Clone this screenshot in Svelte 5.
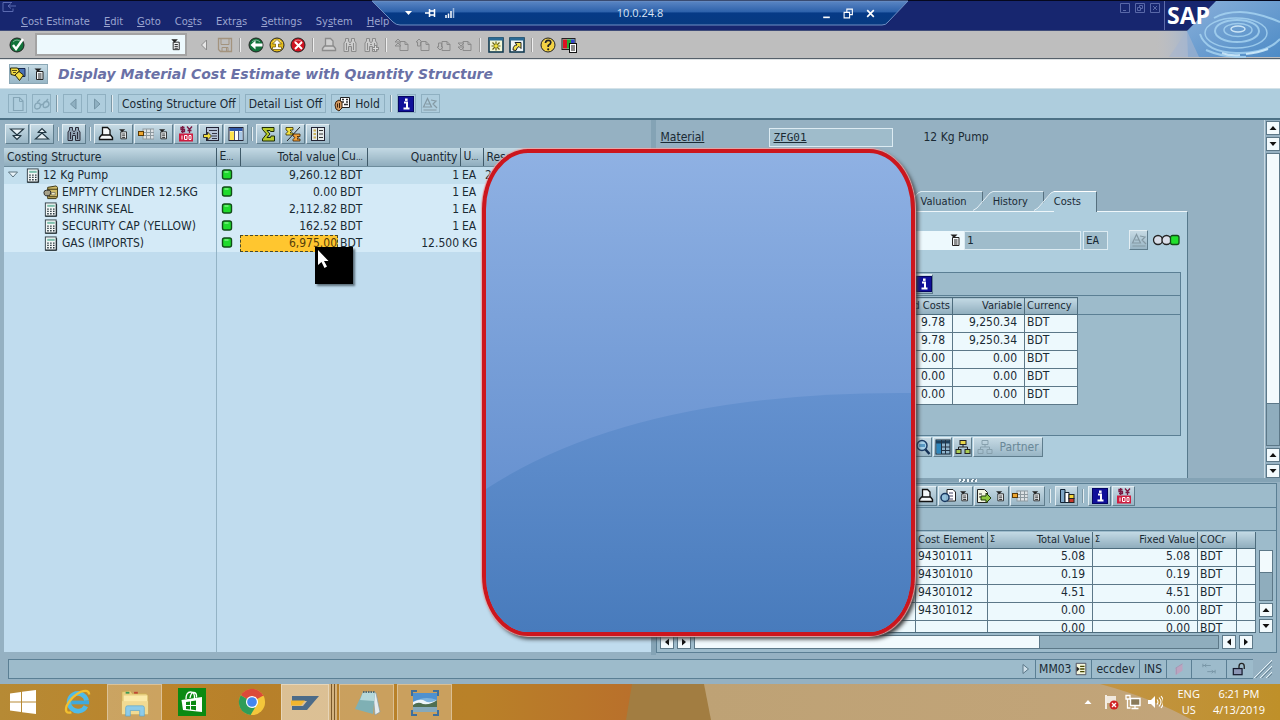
<script>
  const menu = [['C', 'ost Estimate'], ['E', 'dit'], ['G', 'oto'], ['Co', 'sts', 1], ['Extr', 'as', 1], ['S', 'ettings'], ['Sy', 'stem', 1], ['H', 'elp']];

  const tree = [
    { level: 0, icon: 'calc', name: '12 Kg Pump', value: '9,260.12', cur: 'BDT', qty: '1', unit: 'EA', res: '2' },
    { level: 1, icon: 'material', name: 'EMPTY CYLINDER 12.5KG', value: '0.00', cur: 'BDT', qty: '1', unit: 'EA', res: '' },
    { level: 1, icon: 'calc', name: 'SHRINK SEAL', value: '2,112.82', cur: 'BDT', qty: '1', unit: 'EA', res: '' },
    { level: 1, icon: 'calc', name: 'SECURITY CAP (YELLOW)', value: '162.52', cur: 'BDT', qty: '1', unit: 'EA', res: '' },
    { level: 1, icon: 'calc', name: 'GAS (IMPORTS)', value: '6,975.00', cur: 'BDT', qty: '12.500', unit: 'KG', res: '', selected: true }
  ];

  const costs = [
    ['9.78', '9,250.34', 'BDT'],
    ['9.78', '9,250.34', 'BDT'],
    ['0.00', '0.00', 'BDT'],
    ['0.00', '0.00', 'BDT'],
    ['0.00', '0.00', 'BDT']
  ];

  const items = [
    ['94301011', '5.08', '5.08', 'BDT'],
    ['94301010', '0.19', '0.19', 'BDT'],
    ['94301012', '4.51', '4.51', 'BDT'],
    ['94301012', '0.00', '0.00', 'BDT'],
    ['', '0.00', '0.00', 'BDT']
  ];

  const page = (c) => `<path d="M6 4.500h5l3 3v6h-8z" fill="none" stroke="${c}"/><path d="M11 4.500v3h3" fill="none" stroke="${c}"/>`;
  const binoculars = (s, f) => `<path d="M2 14.500v-8.500l1.500-2v-2.500h3v2.500l1 1.500h1l1-1.500v-2.500h3v2.500l1.500 2v8.500h-4.500v-5h-3v5z" fill="${f}" stroke="${s}"/><path d="M4.500 6v7M11.500 6v7M7 7.500h2" stroke="${s}" fill="none"/>`;
  const printer = (s, f) => `<path d="M4.500 9v-7.500h5l2.500 2.500v5" fill="${f}" stroke="${s}" stroke-width="1.300"/><path d="M1.500 13.500v-2l2-2.500h9l2 2.500v2z" fill="${f}" stroke="${s}" stroke-width="1.400"/>`;
  const currency = `<path d="M6.500 1.500h-3.500v2h3.500v2h-3.500M4.700 0v7M9 0.500l2.500 3 2.500-3M11.500 3v4M9.500 4.500h4" fill="none" stroke="#7a1740" stroke-width="1.300"/><rect x="1" y="7.500" width="14" height="8" fill="#cf1c3f"/><path d="M4 9.500v4M6.500 9.500h2.500v4h-2.500zM11 9.500h2v4h-2z" fill="none" stroke="#fff"/>`;
  const ball = (fill, mark) => `<circle cx="8" cy="8" r="7" fill="${fill}" stroke="#222"/><path d="M4 5q4-4 8 0" fill="none" stroke="#fff" stroke-opacity=".45"/>${mark}`;
  const grid = `<rect x="5" y="3" width="11" height="10" fill="#dde2e5" stroke="#8d999f"/><path d="M5 6.500h11M5 9.500h11M8.500 3v10M12.500 3v10" stroke="#8d999f"/><rect x="0.500" y="5.500" width="5" height="4" fill="#eda52f" stroke="#5c3a05"/>`;

  const icons = {
    ok: ball('#12733a', '<path d="M4 8l3 4 7-10" fill="none" stroke="#fff" stroke-width="2.400"/>'),
    back: ball('#12733a', '<path d="M2.500 8l5-4.500v3h7v3h-7v3z" fill="#fff"/>'),
    up: ball('#e5bd1d', '<path d="M8 2.500l4.500 4.500h-3v3h3v2.500h-9v-2.500h3v-3h-3z" fill="#fff" stroke="#6a5100" stroke-width=".7"/>'),
    cancel: ball('#cf1321', '<path d="M5 5l7 7M12 5l-7 7" stroke="#fff" stroke-width="2"/>'),
    help: ball('#f3d244', '<path d="M5.500 6q0-2.700 2.700-2.700t2.600 2.300q0 1.500-2.600 2.900v1.500" fill="none" stroke="#222" stroke-width="1.700"/><circle cx="8.200" cy="12.300" r="1.100" fill="#222"/>'),
    list: '<path d="M5.500 5.500h6.500v8h-6.500z" fill="#f4f8fa" stroke="#222"/><path d="M7 8h3.500M7 10h3.500M7 12h3.500" stroke="#222"/><path d="M3.500 2.500h7l-3.500 3.500z" fill="#222"/>',
    save: '<path d="M1.500 1.500h13v13h-11l-2-2z" fill="none" stroke="#a3937e" stroke-width="1.300"/><path d="M4 1.500v6h8v-6M5 14.500v-4h6v4M9.500 11v3" fill="none" stroke="#a3937e"/>',
    print: printer('#111', '#f6f9fa'),
    printOff: printer('#8b8b8b', '#cfcfcf'),
    find: binoculars('#2c2c3a', '#8fa0b0'),
    findOff: binoculars('#8b8b8b', '#cccccc'),
    findNextOff: binoculars('#8b8b8b', '#cccccc') + '<path d="M12.500 8v7M9 11.500h7" stroke="#8b8b8b" stroke-width="3"/><path d="M12.500 9v5M10 11.500h5" stroke="#ddd"/>',
    pageFirst: page('#8b8b8b') + '<path d="M1 5l3-3 3 3zM1 9l3-3 3 3z" fill="#bbb" stroke="#8b8b8b"/>',
    pagePrev: page('#8b8b8b') + '<path d="M1 5l3-3 3 3h-1.500v4h-3v-4z" fill="#bbb" stroke="#8b8b8b"/>',
    pageNext: page('#8b8b8b') + '<path d="M1 10l3 3 3-3h-1.500v-4h-3v4z" fill="#bbb" stroke="#8b8b8b"/>',
    pageLast: page('#8b8b8b') + '<path d="M1 6l3 3 3-3zM1 10l3 3 3-3z" fill="#bbb" stroke="#8b8b8b"/>',
    session: '<rect x="1" y="1" width="14" height="14" fill="#f4f7d8" stroke="#123b52" stroke-width="1.600"/><path d="M1 2h14" stroke="#2a6a95" stroke-width="3"/><path d="M8 4.500v9M3.500 9h9M4.500 5.500l7 7M11.500 5.500l-7 7" stroke="#65620c" stroke-width="1.200"/><circle cx="8" cy="9" r="1.800" fill="#f5e53b"/>',
    shortcut: '<rect x="1" y="1" width="14" height="14" fill="#eef5f7" stroke="#123b52" stroke-width="1.600"/><path d="M1 2h14" stroke="#2a6a95" stroke-width="3"/><path d="M4 13q0-5 4-5l-2-2.500h6v6l-2-2q-2 .5-3 4z" fill="#f3e04a" stroke="#222"/>',
    layout: '<rect x="1" y="1.500" width="13" height="11" fill="#9cb" stroke="#222"/><rect x="2" y="2.500" width="4" height="9" fill="#d12"/><rect x="6" y="2.500" width="4" height="9" fill="#2a3"/><rect x="10" y="2.500" width="3.500" height="5" fill="#34c"/><rect x="8.500" y="6.500" width="7" height="9" fill="#fff" stroke="#111"/><path d="M10 9h4M10 11h4M10 13h4" stroke="#111"/>',
    services: '<path d="M7 2.500h8v8h-5z" fill="#4b73b5" stroke="#16264d"/><path d="M0.500 2h7l2 3-3 2.500-1.500 2-4-1z" fill="#f2dd45" stroke="#2c2808"/><path d="M5 9l4-3.500 4.500 3.500-4 5.500z" fill="#f2dd45" stroke="#2c2808"/><path d="M2 4.500h5M3 6.500h3" stroke="#2c2808" stroke-width=".8"/>',
    newOff: '<path d="M3.500 1.500h6l3.500 3.500v9.500h-9.500z" fill="none" stroke="#85a6b7" stroke-width="1.200"/><path d="M9.500 1.500v4h3.500" fill="none" stroke="#85a6b7"/>',
    glassesOff: '<path d="M1 9q-1 4 2 4t3.500-3q0-3-2.500-3t-3 2M9.500 8q-1 4 2 3.500t3.500-3q0-3-2.500-3t-3 2.500M6.500 9.500q1.500-2 3-1M3 6.500l3-3M12 5.500l2-2.500" fill="none" stroke="#85a6b7" stroke-width="1.400"/>',
    leftOff: '<path d="M11 3v10l-5.500-5z" fill="#8fb0c1" stroke="#7595a6"/>',
    rightOff: '<path d="M5.500 3v10l5.500-5z" fill="#8fb0c1" stroke="#7595a6"/>',
    hold: '<path d="M6.500 1.500h9v10h-9z" fill="#fff" stroke="#222"/><path d="M8 3.500h2M12 3.500h2M8 6h2M12 6h2M10 8.500h4" stroke="#333" stroke-width="1.300"/><path d="M1 9q0-4 4-5l3 2v6l-3 3q-4-1-4-6z" fill="#d49a60" stroke="#3b220c"/><path d="M3.500 7.500v4M5.500 7v5" stroke="#3b220c"/>',
    info: '<rect x="0.500" y="0.500" width="15" height="15" fill="#10109a" stroke="#050562"/><path d="M6 6.500h3v5.500M5.500 12.500h6" stroke="#fff" stroke-width="2" fill="none"/><rect x="7" y="2.500" width="2.600" height="2.400" fill="#fff"/>',
    scaleOff: '<path d="M1.500 11l4-8.500 4 8.500zM1.500 14h13M9 4l5 1-3 3 4 4M4 8h4" fill="none" stroke="#8499a4" stroke-width="1.200"/>',
    expand: '<path d="M1.500 3h13l-6.500 6zM4 9.500l4 4 4-4" fill="#e6f0f5" stroke="#223642" stroke-width="1.200"/><path d="M3.500 9.500h9" stroke="#223642"/>',
    collapse: '<path d="M1.500 13h13l-6.500-6zM4 6.500l4-4 4 4" fill="#e6f0f5" stroke="#223642" stroke-width="1.200"/><path d="M3.500 6.500h9" stroke="#223642"/>',
    grid,
    currency,
    change: '<rect x="3.500" y="1.500" width="12" height="13" fill="#b7c3d6" stroke="#223"/><path d="M6 4.500h8M9 7.500h5M9 10h5M9 12.500h5" stroke="#334"/><path d="M0.500 8.500h4v-2.500l4 4-4 4v-2.500h-4z" fill="#f2df3b" stroke="#333"/>',
    columns: '<rect x="1" y="1.500" width="14" height="13" fill="#fff" stroke="#223"/><rect x="1.500" y="2" width="13" height="3" fill="#3057a8"/><rect x="2" y="5.500" width="4" height="8.500" fill="#ffe34e"/><path d="M6.500 5v9M10.500 5v9" stroke="#557"/><rect x="11" y="5.500" width="3.500" height="8.500" fill="#a9c8e6"/>',
    sum: '<path d="M2 1.500h12v4h-3.500l-.5-1h-3l3 3.500-3 3.500h3.500l.5-1.500h3.500v5h-12v-2l4-5-4-4.500z" fill="#b7c92b" stroke="#1c2a06"/>',
    subtotal: '<path d="M1 1.500h7v2.500h-3l1.500 1.500-1.500 1.500h3v2h-7v-1.500l2-2-2-1.500z" fill="#f3e140" stroke="#332b00" stroke-width=".8"/><path d="M8 8h7v2.500h-3l1.500 1.200-1.500 1.300h3v2h-7v-1.500l2-2-2-1.500z" fill="#f0a13c" stroke="#402100" stroke-width=".8"/><path d="M15 1l-13 14" stroke="#222"/>',
    legend: '<rect x="1.500" y="1.500" width="13" height="13" fill="#e4eaea" stroke="#223"/><path d="M3.500 4.500h2.500M3.500 8h2.500M3.500 11.500h2.500" stroke="#c9b15a" stroke-width="2"/><path d="M9 4.500h4M9 8h4M9 11.500h4M7.500 2v12" stroke="#333"/>',
    calc: '<rect x="2.500" y="1" width="11.500" height="14" fill="#f2f6f5" stroke="#33424a"/><path d="M2.500 15.200h12v-13" fill="none" stroke="#1b2428"/><rect x="4.500" y="3" width="8" height="2.200" fill="#7dc0ad"/><path d="M4.500 7.500h8M4.500 10h8M4.500 12.500h8" stroke="#26353d" stroke-width="1.400" stroke-dasharray="1.600 1.500"/>',
    material: '<path d="M5 2.500l9-1.500 1.500 1.500v10l-1.500 2h-9z" fill="#d1bd6a" stroke="#3a3210"/><path d="M5 4.500h10M6 12.500h9" stroke="#3a3210"/><path d="M1 8q0-2.500 3-2.500h3l1.500 2-1.500 4h-4q-2-.5-2-3.500z" fill="#a7a189" stroke="#222"/><path d="M9 8h4v2.500h-4z" fill="#f5efc5" stroke="#555" stroke-width=".6"/>',
    led: '<rect x="3.500" y="3" width="9" height="9" rx="2" fill="#1fdb2c" stroke="#114d18" stroke-width="1.400"/><path d="M5.500 5h4" stroke="#a8ffad"/>',
    detail: '<circle cx="7" cy="6.500" r="5" fill="#a8d2ea" stroke="#1c3d66" stroke-width="1.500"/><path d="M4 5h6v3h-6z" fill="#5b9cc7"/><path d="M10.500 10.500l4 4.500" stroke="#143157" stroke-width="2.500"/>',
    table: '<rect x="1" y="1" width="14" height="14" fill="#8fb4cc" stroke="#123"/><path d="M1.500 1.500h5v13h-5z" fill="#2e86bb"/><path d="M1 3h14" stroke="#1d405c" stroke-width="3"/><path d="M6.500 1v14M10.500 1v14M6 8h9M6 11.500h9" stroke="#234"/>',
    org: '<rect x="5" y="1.500" width="6" height="4" fill="#e8d54a" stroke="#222"/><rect x="1" y="10.500" width="5" height="4" fill="#a9cc52" stroke="#222"/><rect x="10" y="10.500" width="5" height="4" fill="#a9cc52" stroke="#222"/><path d="M8 5.500v2.500M3.500 10.500v-2.500h9v2.500" fill="none" stroke="#222"/>',
    orgOff: '<path d="M5 1.500h6v4h-6zM1 10.500h5v4h-5zM10 10.500h5v4h-5zM8 5.500v2.500M3.500 10.500v-2.500h9v2.500" fill="none" stroke="#87a0ad"/>',
    views: '<path d="M7 1.500h6l2.500 2.500v9h-8.500z" fill="#fff" stroke="#222"/><path d="M9 5h4M9 8h4M9 11h4" stroke="#446"/><circle cx="5" cy="9.500" r="4" fill="#8fc1de" fill-opacity=".8" stroke="#17365e" stroke-width="1.500"/>',
    export: '<path d="M1.500 1.500h7l3 3v10h-10z" fill="#f4f6e2" stroke="#222"/><path d="M3 6h3M3 9h3" stroke="#333"/><path d="M5 8h5v-3l5 5-5 5v-3h-5z" fill="#8cc63c" stroke="#1e3a08"/>',
    chart: '<path d="M1.500 1.500h4.500v13h-4.500z" fill="#7fa7c8" stroke="#123"/><path d="M6 4.500h4v10h-4z" fill="#fff" stroke="#123"/><rect x="10" y="6.500" width="5" height="4" fill="#f4d53a" stroke="#222"/><rect x="10" y="10.500" width="5" height="4" fill="#c8392c" stroke="#222"/>',
    flag: '<path d="M3 1v14" stroke="#fff" stroke-width="1.600"/><path d="M4 2h9v7h-9z" fill="#fff" fill-opacity=".75"/><circle cx="11" cy="11" r="4.500" fill="#d02323"/><path d="M9 9l4 4M13 9l-4 4" stroke="#fff" stroke-width="1.300"/>',
    network: '<path d="M5.500 4.500h9.500v7h-9.500z" fill="#8a7a5a" stroke="#fff" stroke-width="1.400"/><path d="M10 11.500v2.500M6.500 14.500h7M2.500 5v9h3M1 1.500h4v3.500h-4z" fill="none" stroke="#fff" stroke-width="1.300"/>',
    sound: '<path d="M1 6h3l4-4v12l-4-4h-3z" fill="#fff"/><path d="M10 5.500q2 2.500 0 5M12 3.500q4 4.500 0 9M14 2q5 6 0 12" fill="none" stroke="#fff" stroke-width="1.100"/>'
  };

  const standardBar = [
    ['back', 'Back'], ['up', 'Exit'], ['cancel', 'Cancel'], null,
    ['printOff', 'Print'], ['findOff', 'Find'], ['findNextOff', 'Find next'], null,
    ['pageFirst', 'First page'], ['pagePrev', 'Previous page'], ['pageNext', 'Next page'], ['pageLast', 'Last page'], null,
    ['session', 'New session'], ['shortcut', 'Create shortcut'], null,
    ['help', 'Help'], ['layout', 'Customize layout']
  ];

  const treeBar = [
    ['expand', 'Expand'], ['collapse', 'Collapse'], null, ['find', 'Find'], null,
    ['print', 'Print', 1], ['grid', 'Layout', 1], ['currency', 'Currency'], ['change', 'Change view'], ['columns', 'Columns'], null,
    ['sum', 'Total'], ['subtotal', 'Subtotal'], ['legend', 'Legend']
  ];

  const itemBar = [
    ['print', 'Print'], ['views', 'Views', 1], ['export', 'Export', 1], ['grid', 'Layout', 1], null,
    ['chart', 'Chart'], null, ['info', 'Information'], ['currency', 'Currency']
  ];
</script>

{#snippet icon(name)}
  <svg class="icon" viewBox="0 0 16 16" aria-hidden="true">{@html icons[name]}</svg>
{/snippet}

{#snippet tools(list)}
  {#each list as entry}
    {#if entry}
      <button class="tool" class:wide={entry[2]} aria-label={entry[1]}>
        {@render icon(entry[0])}
        {#if entry[2]}{@render icon('list')}{/if}
      </button>
    {:else}
      <span class="sep"></span>
    {/if}
  {/each}
{/snippet}

{#snippet arrow(dir)}
  <button class="arrow" aria-label="Scroll {dir}">
    <svg viewBox="0 0 12 12" aria-hidden="true">
      {#if dir === 'up'}<path d="M2.500 8h7l-3.500-4z" />
      {:else if dir === 'down'}<path d="M2.500 4h7l-3.500 4z" />
      {:else if dir === 'left'}<path d="M8 2.500v7l-4-3.500z" />
      {:else}<path d="M4 2.500v7l4-3.500z" />{/if}
    </svg>
  </button>
{/snippet}

{#snippet slant(active)}
  <svg class="slant" class:active viewBox="0 0 20 20" aria-hidden="true">
    <path class="fill" d="M0 20L4 18L18 1.500L20 0.500V20Z" />
    <path class="edge" d="M0 19.500L4 17L17 2L20 0.500" />
  </svg>
{/snippet}

<div class="screen">
  <header class="menubar">
    <nav>
      {#each menu as [a, b, tail]}
        <button class="menu-item">{#if tail}{a}<u>{b[0]}</u>{b.slice(1)}{:else}<u>{a}</u>{b}{/if}</button>
      {/each}
    </nav>
    <svg class="sys" viewBox="0 0 16 12" aria-hidden="true"><path d="M11 1.500h-9v9h10v-3M15 5h-8M10 2.500l-3 2.500 3 2.500" fill="none" stroke="#5b6ab0" /></svg>
    <div class="win-ctl">
      <button aria-label="Minimize"><svg viewBox="0 0 10 10"><path d="M.5.500h9v9h-9zM3 7.500h3" /></svg></button>
      <button aria-label="Restore"><svg viewBox="0 0 10 10"><path d="M.5.500h9v9h-9zM2.500 4.500h3v3h-3zM4.500 4v-1.500h3v3h-1.500" /></svg></button>
      <button aria-label="Close"><svg viewBox="0 0 10 10"><path d="M.5.500h9v9h-9zM3 3l4 4M7 3l-4 4" /></svg></button>
    </div>
  </header>

  <div class="remote">
    <svg class="remote-bg" viewBox="0 0 536 26" preserveAspectRatio="none" aria-hidden="true">
      <defs>
        <linearGradient id="rd" x1="0" y1="0" x2="0" y2="1">
          <stop offset="0" stop-color="#5b86c4" /><stop offset=".45" stop-color="#2e62ab" />
          <stop offset=".5" stop-color="#063a86" /><stop offset="1" stop-color="#073a80" />
        </linearGradient>
      </defs>
      <path d="M0 1h536l-20 21q-2 3-6 3h-482q-4 0-7-3z" fill="url(#rd)" stroke="#6f8fc4" />
    </svg>
    <div class="remote-left">
      <svg viewBox="0 0 50 12" aria-hidden="true">
        <path d="M1 4h7l-3.500 4z" fill="#fff" />
        <path d="M21 6h4M25.500 2v8M25.500 4h5M25.500 8h5M30.500 2v8" stroke="#fff" fill="none" stroke-width="1.500" />
        <path d="M42 11v-3M44.500 11v-4.500M47 11v-7" stroke="#fff" stroke-width="1.500" /><path d="M49.500 11v-10" stroke="#9db8dd" stroke-width="1.500" />
      </svg>
    </div>
    <span class="host">10.0.24.8</span>
    <div class="remote-right">
      <button aria-label="Minimize session"><svg viewBox="0 0 10 10"><path d="M2 8.500h6" stroke="#fff" stroke-width="1.500" /></svg></button>
      <button aria-label="Restore session"><svg viewBox="0 0 10 10"><path d="M1 4h5v5h-5zM3.500 4v-3h5v5h-2.500" stroke="#fff" stroke-width="1" fill="none" /></svg></button>
      <button aria-label="Close session"><svg viewBox="0 0 10 10"><path d="M2 2l6 6M8 2l-6 6" stroke="#fff" stroke-width="1.500" /></svg></button>
    </div>
  </div>

  <div class="brand">
    <svg viewBox="0 0 124 58" aria-hidden="true">
      <defs>
        <linearGradient id="sky" x1="0" y1="0" x2="1" y2="0">
          <stop offset="0" stop-color="#b9bccb" stop-opacity="0" /><stop offset=".35" stop-color="#8fb0d4" /><stop offset="1" stop-color="#5d93c9" />
        </linearGradient>
        <linearGradient id="sky2" x1="0" y1="0" x2="1" y2="1">
          <stop offset="0" stop-color="#8ab0da" /><stop offset="1" stop-color="#4d8bc6" />
        </linearGradient>
      </defs>
      <path d="M0 31h124v26h-124z" fill="url(#sky)" />
      <path d="M60 1h64v56h-92l-1-26z" fill="url(#sky2)" />
      <path d="M31 31l-18 26h30z" fill="#a7b6cf" opacity=".6" />
      <path d="M8.500 1v29" stroke="#5d6cab" />
      <g fill="none" stroke="#a9d6f2" stroke-opacity=".8">
        <ellipse cx="82" cy="29" rx="7" ry="3" stroke="#e3f6ff" stroke-width="1.500" />
        <ellipse cx="82" cy="30" rx="14" ry="6.500" stroke-width="1.500" />
        <ellipse cx="81" cy="31" rx="22" ry="11" stroke-width="2" />
        <ellipse cx="80" cy="33" rx="31" ry="15" stroke-width="1.500" />
        <path d="M44 34q6 18 36 19t44-14M58 18q10-6 26-6t40 10M50 50q18 8 40 7" stroke-width="2" />
        <path d="M66 53q8 3 18 2M90 54q12-1 22-5" stroke="#d8f3ff" stroke-width="2" />
      </g>
    </svg>
    <span>SAP</span>
  </div>

  <div class="stdbar">
    <button class="ok" aria-label="Enter">{@render icon('ok')}</button>
    <div class="command">
      <input type="text" aria-label="Command" />
      <button aria-label="Command history">{@render icon('list')}</button>
    </div>
    <button class="std" aria-label="Hide command field"><svg class="icon" viewBox="0 0 16 16"><path d="M10.500 3v10l-5-5z" fill="#e6e6e6" stroke="#8b8b8b" /></svg></button>
    <button class="std" aria-label="Save">{@render icon('save')}</button>
    <span class="sep"></span>
    {#each standardBar as entry}
      {#if entry}<button class="std" aria-label={entry[1]}>{@render icon(entry[0])}</button>{:else}<span class="sep"></span>{/if}
    {/each}
  </div>

  <div class="titlebar">
    <button class="service" aria-label="Services for object">{@render icon('services')}<i></i>{@render icon('list')}</button>
    <h1>Display Material Cost Estimate with Quantity Structure</h1>
  </div>

  <div class="appbar">
    <button class="flat sq" aria-label="Create">{@render icon('newOff')}</button>
    <button class="flat sq" aria-label="Display">{@render icon('glassesOff')}</button>
    <span class="sep"></span>
    <button class="flat sq" aria-label="Previous">{@render icon('leftOff')}</button>
    <button class="flat sq" aria-label="Next">{@render icon('rightOff')}</button>
    <span class="sep"></span>
    <button class="flat">Costing Structure Off</button>
    <button class="flat">Detail List Off</button>
    <button class="flat hold">{@render icon('hold')}Hold</button>
    <span class="sep"></span>
    <button class="flat sq" aria-label="Information">{@render icon('info')}</button>
    <button class="flat sq" aria-label="Compare">{@render icon('scaleOff')}</button>
  </div>

  <main>
    <section class="left">
      <div class="toolbar">{@render tools(treeBar)}</div>
      <div class="tree">
        <table>
          <colgroup><col class="c1" /><col class="c2" /><col class="c3" /><col class="c4" /><col class="c5" /><col class="c6" /><col /></colgroup>
          <thead>
            <tr><th>Costing Structure</th><th>E<small>...</small></th><th class="r">Total value</th><th>Cu<small>...</small></th><th class="r">Quantity</th><th>U<small>...</small></th><th>Resource</th></tr>
          </thead>
          <tbody>
            {#each tree as row}
              <tr class:root={row.level === 0}>
                <td>
                  <div class="node" class:child={row.level}>
                    {#if !row.level}<svg class="twist" viewBox="0 0 12 12" aria-hidden="true"><path d="M1.500 3h9l-4.500 5z" fill="#e8f3f9" stroke="#5d7480" /></svg>{/if}
                    {@render icon(row.icon)}<span>{row.name}</span>
                  </div>
                </td>
                <td class="led">{@render icon('led')}</td>
                <td class="r num" class:selected={row.selected}>{row.value}</td>
                <td>{row.cur}</td>
                <td class="r num">{row.qty}</td>
                <td>{row.unit}</td>
                <td>{row.res}</td>
              </tr>
            {/each}
          </tbody>
        </table>
        <div class="pointer">
          <svg viewBox="0 0 38 37" aria-hidden="true"><path d="M3 3v15l3.500-3 3 6 2.500-1.500-3-5.500h4.500z" fill="#fff" /></svg>
        </div>
      </div>
    </section>

    <section class="right">
      <div class="upper">
        <div class="form">
          <div class="material">
            <label for="mat">Material</label>
            <input id="mat" type="text" value="ZFG01" readonly />
            <span>12 Kg Pump</span>
          </div>
          <div class="tabs" role="tablist">
            <button role="tab" aria-selected="false">{@render slant(false)}<span>Valuation</span></button>
            <button role="tab" aria-selected="false">{@render slant(false)}<span>History</span></button>
            <button class="active" role="tab" aria-selected="true">{@render slant(true)}<span>Costs</span></button>
          </div>
          <div class="panel">
            <div class="lot">
              <div class="pick"><input type="text" aria-label="Costs based on" /><button aria-label="Choose base">{@render icon('list')}</button></div>
              <input class="qty" type="text" value="1" aria-label="Quantity" readonly />
              <input class="unit" type="text" value="EA" aria-label="Unit" readonly />
              <button class="tool" aria-label="Compare">{@render icon('scaleOff')}</button>
              <svg class="lights" viewBox="0 0 28 12" aria-hidden="true">
                <circle cx="6" cy="6" r="4.500" fill="#d9dde8" stroke="#222" stroke-width="1.300" /><circle cx="14.500" cy="6" r="4.500" fill="#d9dde8" stroke="#222" stroke-width="1.300" />
                <rect x="18.500" y="1.500" width="8.500" height="9" rx="2" fill="#1fe02c" stroke="#114d18" stroke-width="1.300" />
              </svg>
            </div>
            <div class="box">
              <div class="box-bar"><button class="tool" aria-label="Information">{@render icon('info')}</button></div>
              <div class="box-head"></div>
              <table class="grid-table costs">
                <colgroup><col /><col class="k2" /><col class="k3" /></colgroup>
                <thead><tr><th class="r">Fixed Costs</th><th class="r">Variable</th><th>Currency</th></tr></thead>
                <tbody>
                  {#each costs as row}<tr><td class="r">{row[0]}</td><td class="r">{row[1]}</td><td>{row[2]}</td></tr>{/each}
                </tbody>
              </table>
            </div>
            <div class="below">
              <button class="tool" aria-label="Details">{@render icon('detail')}</button>
              <button class="tool" aria-label="Table">{@render icon('table')}</button>
              <button class="tool" aria-label="Hierarchy">{@render icon('org')}</button>
              <button class="tool partner" disabled>{@render icon('orgOff')}Partner</button>
            </div>
          </div>
        </div>
        <div class="vscroll">
          {@render arrow('up')}{@render arrow('down')}
          <div class="trough"><div class="thumb tall"></div></div>
          {@render arrow('up')}{@render arrow('down')}
        </div>
      </div>

      <div class="splitter"><i></i></div>

      <div class="lower">
        <div class="toolbar items-bar">{@render tools(itemBar)}</div>
        <div class="items-row">
          <div class="items">
            <table class="grid-table">
              <colgroup><col /><col class="i1" /><col class="i2" /><col class="i2" /><col class="i3" /><col class="i4" /></colgroup>
              <thead>
                <tr><th></th><th>Cost Element</th><th><div class="sigma"><b>Σ</b>Total Value</div></th><th><div class="sigma"><b>Σ</b>Fixed Value</div></th><th>COCr</th><th></th></tr>
              </thead>
              <tbody>
                {#each items as row}<tr><td></td><td>{row[0]}</td><td class="r far">{row[1]}</td><td class="r far">{row[2]}</td><td>{row[3]}</td><td></td></tr>{/each}
              </tbody>
            </table>
          </div>
          <div class="vscroll small">
            <div class="trough"><div class="thumb short"></div></div>
            {@render arrow('up')}{@render arrow('down')}
          </div>
        </div>
        <div class="hscroll">
          {@render arrow('left')}{@render arrow('right')}
          <div class="trough"><div class="thumb"></div></div>
          {@render arrow('left')}{@render arrow('right')}
        </div>
      </div>
    </section>
  </main>

  <div class="callout">
    <svg viewBox="0 0 425 479" preserveAspectRatio="none" aria-hidden="true">
      <defs>
        <linearGradient id="deep" x1="0" y1="0" x2="0" y2="1">
          <stop offset="0" stop-color="#6491cf" /><stop offset="1" stop-color="#487bbc" />
        </linearGradient>
      </defs>
      <path d="M0 336Q150 238 425 240V479H0Z" fill="url(#deep)" />
    </svg>
  </div>

  <footer class="status">
    <div class="message"><svg viewBox="0 0 10 12" aria-hidden="true"><path d="M2 1.500v9l5.500-4.500z" fill="#cfe0ea" stroke="#5b7787" /></svg></div>
    <div class="cell tcode">MM03
      <svg class="icon" viewBox="0 0 16 16" aria-hidden="true"><path d="M2.500 1.500h11v13h-11z" fill="#f4f6dc" stroke="#445" /><path d="M7 5h5M7 8h5M7 11h5" stroke="#454500" stroke-width="1.500" /><path d="M3 5v6l3.500-3z" fill="#222" /></svg>
    </div>
    <div class="cell">eccdev</div>
    <div class="cell">INS</div>
    <div class="cell ic"><svg class="icon" viewBox="0 0 16 16" aria-hidden="true"><path d="M4 7l8-5v8l-8 5z" fill="#bda3bf" /><path d="M5 7v7M4 7l8-5" stroke="#a493b0" fill="none" /></svg></div>
    <div class="cell ic wide-ic"><svg class="icon" viewBox="0 0 16 16" aria-hidden="true"><path d="M1 4h9M1 2v4M3 4l2-2M3 4l2 2M6 11h9M15 9v4M13 11l-2-2M13 11l-2 2" stroke="#7694a4" fill="none" /></svg></div>
    <div class="cell ic lock"><svg class="icon" viewBox="0 0 16 16" aria-hidden="true"><path d="M8 8v-3q0-3.500 3-3.500t3 3.500v3" fill="none" stroke="#222" stroke-width="1.500" /><rect x="1.500" y="7.500" width="10" height="7" fill="#8d96b5" stroke="#14192b" stroke-width="1.400" /></svg></div>
    <svg class="grip" viewBox="0 0 20 20" aria-hidden="true"><path d="M1 19l18-18M7 19l12-12M13 19l6-6" stroke="#e6f1f6" /><path d="M3 19l16-16M9 19l10-10M15 19l4-4" stroke="#6c8797" /></svg>
  </footer>

  <div class="taskbar">
    <svg class="wall" viewBox="0 0 1280 36" preserveAspectRatio="none" aria-hidden="true">
      <defs>
        <linearGradient id="wa" x1="0" y1="0" x2="1" y2="0">
          <stop offset="0" stop-color="#b68a35" /><stop offset=".25" stop-color="#bb842b" /><stop offset=".4" stop-color="#b7802a" /><stop offset=".75" stop-color="#b98128" /><stop offset="1" stop-color="#b9702b" />
        </linearGradient>
        <linearGradient id="wb" x1="0" y1="0" x2="1" y2="0">
          <stop offset="0" stop-color="#bea275" /><stop offset="1" stop-color="#c3a57a" />
        </linearGradient>
        <linearGradient id="wc" x1="0" y1="0" x2="1" y2="0">
          <stop offset="0" stop-color="#c29445" /><stop offset="1" stop-color="#bf9029" />
        </linearGradient>
      </defs>
      <path d="M0 0h632v36h-632z" fill="url(#wa)" />
      <path d="M632 0h80v36h-86z" fill="#a27d41" />
      <path d="M704 0h576v36h-569z" fill="url(#wb)" />
      <path d="M1100 0h180v36h-88q-40-22-92-36z" fill="url(#wc)" />
    </svg>
    <div class="apps">
      <button class="app start" aria-label="Start"><svg viewBox="0 0 26 24"><path d="M0 3.500l11-1.500v9.500h-11zM12 1.800l14-1.800v11.500h-14zM0 12.500h11v9.500l-11-1.500zM12 12.500h14v11.500l-14-1.800z" fill="#fff" /></svg></button>
      <button class="app ie" aria-label="Internet Explorer"><svg viewBox="0 0 30 30"><path d="M24.500 19.500a9.500 9.500 0 1 1 .8-6" fill="none" stroke="#4fbbe8" stroke-width="5" /><path d="M9 15.500h19" stroke="#3fa9dd" stroke-width="4" /><path d="M28 7q0-6-9-3q-10 5-15 15q-3 9 5 7" fill="none" stroke="#f3c02f" stroke-width="2.500" /></svg></button>
      <button class="app open" aria-label="File Explorer"><svg viewBox="0 0 30 30"><path d="M1 3l9-1 2 3h15l2 2v20h-28z" fill="#e9cf80" stroke="#c8a84e" stroke-width=".6" /><path d="M3 7h25v17h-25z" fill="#fbeaa9" /><path d="M5 4h4" stroke="#3c9a55" stroke-width="2" /><path d="M14 4h4" stroke="#c04632" stroke-width="2" /><path d="M1 13h28v14h-28z" fill="#f1da92" /><path d="M5 29v-9q0-2 2-2h16q2 0 2 2v9h-5v-6h-10v6z" fill="#8ccbe9" stroke="#5ba3c8" stroke-width=".7" /></svg></button>
      <button class="app store" aria-label="Store"><svg viewBox="0 0 28 28"><rect width="28" height="28" fill="#0b8a12" /><path d="M8 11q0-7 4.500-7t4 7M12 10q1-6 4-5.500t2.500 5" fill="none" stroke="#fff" stroke-width="1.300" /><path d="M3.500 12l20.500-3v15l-19-2z" fill="#fff" /><path d="M8 14l4-.5v3.500h-4zM13 13.300l5-.7v4.400h-5zM8 18h4v3.500l-4-.5zM13 18h5v4.300l-5-.7z" fill="#0b8a12" /></svg></button>
      <button class="app chrome" aria-label="Chrome"><svg viewBox="0 0 30 30"><circle cx="15" cy="15" r="14" fill="#f4c63b" /><path d="M15 15l-12-7.300a14 14 0 0 1 24.200.3z" fill="#db4a3a" /><path d="M15 15l-12.100-7.200a14 14 0 0 0 10.600 21.200l6.500-11z" fill="#2f9d58" /><path d="M15 8.500h12.500l-.3-.8-12.200-1z" fill="#db4a3a" /><circle cx="15" cy="15" r="6.500" fill="#fff" /><circle cx="15" cy="15" r="5.200" fill="#4486f0" /></svg></button>
      <button class="app open current" aria-label="SAP Logon"><svg viewBox="0 0 30 16"><path d="M2 1h27l-12 14h-15v-4h11l4-5h-15z" fill="#4c6b88" /><path d="M1 5.500h14l-4 5h-10z" fill="#f1b62f" /></svg></button>
      <i class="stack"></i>
      <button class="app open note" aria-label="Notepad"><svg viewBox="0 0 28 26"><path d="M20 2l3 1 4 19-5 3z" fill="#e5ebee" stroke="#829aa3" stroke-width=".7" /><path d="M10 2h12l-2 22-18-5z" fill="#7fb0b4" /><path d="M10 2h12l-1 9-14-1z" fill="#b5d8da" /><path d="M10 2h12" stroke="#556b70" stroke-width="2" stroke-dasharray="1.500 1" /></svg></button>
      <button class="app open pic" aria-label="Pictures"><svg viewBox="0 0 28 26"><rect x="2" y="3" width="24" height="19" fill="#7db3dd" /><path d="M2 3h24v7q-12-5-24 2z" fill="#4f91cf" /><path d="M2 12q8-4 12-1t12-1v5h-24z" fill="#eef5fa" /><path d="M2 15q5-4 10-1 8 1 14-4v8h-24z" fill="#4f6f52" /><path d="M2 17h24v5h-24z" fill="#86a9bb" /><path d="M1 6v-5h5M22 1h5v5M27 20v5h-5M6 25h-5v-5" fill="none" stroke="#3e6f9c" stroke-width="2" /></svg></button>
    </div>
    <div class="tray">
      <svg class="chev" viewBox="0 0 10 10" aria-hidden="true"><path d="M1.500 7h7l-3.500-4z" fill="#fff" /></svg>
      {@render icon('flag')}
      {@render icon('network')}
      {@render icon('sound')}
      <div class="lang"><span>ENG</span><span>US</span></div>
      <div class="clock"><span>6:21 PM</span><span>4/13/2019</span></div>
    </div>
  </div>
</div>

<style>
  :global(body) { margin: 0; background: #95b1c2; }
  .screen {
    position: relative; min-height: 100vh; display: flex; flex-direction: column; overflow: hidden;
    font-family: "DejaVu Sans Condensed", "DejaVu Sans", sans-serif; font-size: 12px; line-height: 16px; color: #1a2a34;
    background: #95b1c2;
  }
  button, input { font: inherit; color: inherit; margin: 0; padding: 0; border: 0; background: none; box-sizing: border-box; border-radius: 0; }
  button { display: inline-flex; align-items: center; justify-content: center; white-space: nowrap; }
  input { min-width: 0; }
  .icon { width: 16px; height: 16px; flex: none; display: block; }
  .sep { width: 1px; height: 14px; background: #e4edf1; border-left: 1px solid #7c98a6; flex: none; }

  .menubar { height: 31px; box-sizing: border-box; background: #17266f; border-top: 1px solid #05081e; border-bottom: 1px solid #3f4c79; display: flex; }
  .menubar nav { display: flex; gap: 14px; padding: 13px 0 0 21px; align-items: flex-start; }
  .menu-item { color: #9aa4cf; line-height: 16px; font-size: 11px; }
  .sys { position: absolute; left: 1px; top: 1px; width: 16px; height: 12px; }
  .win-ctl { margin-left: auto; margin-right: 120px; display: flex; gap: 5px; padding-top: 2px; align-items: flex-start; }
  .win-ctl svg { width: 10px; height: 10px; display: block; fill: none; stroke: #5968a8; }

  .remote { position: absolute; top: 0; left: 50%; width: 536px; height: 26px; transform: translateX(-50%); display: grid; grid-template-columns: 1fr auto 1fr; align-items: center; }
  .remote-bg { position: absolute; inset: 0; width: 100%; height: 100%; }
  .remote > :not(.remote-bg) { position: relative; }
  .remote-left { padding-left: 32px; }
  .remote-left svg { width: 50px; height: 12px; display: block; overflow: visible; }
  .host { font-family: "Open Sans", "Noto Sans", sans-serif; color: #d8e4f5; font-size: 11px; }
  .remote-right { display: flex; gap: 11px; justify-content: flex-end; padding-right: 32px; }
  .remote-right svg { width: 11px; height: 11px; display: block; }

  .brand { position: absolute; top: 0; right: 0; width: 124px; height: 58px; }
  .brand svg { width: 124px; height: 58px; display: block; }
  .brand span { position: absolute; left: 11px; top: 0; font: bold 23px/30px "Open Sans", sans-serif; color: #fff; }

  .stdbar { height: 27px; background: #bebebe; border-bottom: 1px solid #55606a; display: flex; align-items: center; box-shadow: 0 1px #dfe3e5; }
  .ok { width: 34px; }
  .command { display: flex; align-items: center; width: 148px; height: 19px; background: #edf9fd; outline: 2px solid #a3a3a3; margin: 0 8px 0 3px; }
  .command input { flex: 1; height: 19px; padding: 0 4px; }
  .command button { width: 20px; }
  .command .icon { width: 15px; height: 15px; }
  .std { width: 21px; }
  .stdbar .sep { margin: 0 4px; border-left-color: #9a9a9a; background: #eee; }

  .titlebar { height: 28px; margin-top: 1px; background: #fff; display: flex; align-items: center; gap: 10px; padding-left: 9px; border-bottom: 1px solid #d4e2e8; }
  .service { width: 39px; height: 20px; background: linear-gradient(#c5dae4, #98b7c7); border: 1px solid #8ba7b5; }
  .service i { width: 1px; height: 14px; background: #7f9aa8; margin: 0 2px; }
  h1 { margin: 0; font-family: "DejaVu Sans", sans-serif; font-size: 14px; line-height: 20px; font-style: italic; font-weight: bold; color: #6a71a6; white-space: nowrap; }

  .appbar { height: 29px; background: #aecddd; border-bottom: 2px solid #4d7185; display: flex; align-items: center; gap: 5px; padding-left: 8px; box-sizing: content-box; }
  .flat { height: 19px; border: 1px solid #8fb0c1; padding: 0 3px; }
  .flat.sq { width: 19px; padding: 0; }
  .flat.hold { padding: 0 4px 0 2px; gap: 5px; }
  .appbar .sep { height: 17px; }

  main { flex: 1; display: grid; grid-template-columns: minmax(0, 648fr) minmax(0, 629fr); padding-left: 4px; }
  .toolbar { display: flex; align-items: center; padding: 0 1px; height: 28px; gap: 1px; }
  .toolbar .sep { margin: 0 2px; }
  .tool { width: 24px; height: 20px; border: 1px solid; border-color: #e3eef3 #5f7d8d #5f7d8d #e3eef3; background: linear-gradient(#c6dae4, #98b5c5); gap: 2px; flex: none; }
  .tool.wide { width: 39px; }
  .tool.wide .icon:last-child { width: 14px; height: 14px; }

  .left { display: flex; flex-direction: column; }
  .tree { flex: 1; position: relative; background: linear-gradient(90deg, transparent 212px, #93b3c5 212px, #93b3c5 213px, transparent 213px), #c0dcee; margin-bottom: 3px; }
  table { border-collapse: collapse; border-spacing: 0; table-layout: fixed; width: 100%; }
  th { font-weight: normal; text-align: left; }
  th, td { padding: 0 3px; white-space: nowrap; overflow: hidden; box-sizing: border-box; }
  .r { text-align: right; }
  .tree .c1 { width: 212px; } .tree .c2 { width: 24px; } .tree .c3 { width: 98px; } .tree .c4 { width: 29px; } .tree .c5 { width: 93px; } .tree .c6 { width: 23px; }
  .tree th { height: 17px; line-height: 16px; background: linear-gradient(#c3d9e4, #8fadbd); border-left: 1px solid #3f5a69; border-bottom: 1px solid #6d8c9c; }
  .tree th:first-child { border-left: 0; }
  .tree th.r { padding-right: 2px; }
  .tree th small { font-size: 8px; }
  .tree td { height: 17px; line-height: 16px; padding: 0 2px; background: #d4eaf7; }
  .tree tr.root td { background: #c3dfee; }
  .tree td:first-child { border-right: 1px solid #93b3c5; }
  .tree td.num { padding-right: 1px; }
  .tree td.selected { background: #ffc62f; color: #553e0a; outline: 1px dashed #4a4a2a; outline-offset: -1px; }
  .node { display: flex; align-items: center; gap: 3px; padding-left: 1px; }
  .node .icon { width: 15px; height: 15px; }
  .node.child { padding-left: 37px; gap: 4px; }
  .twist { width: 12px; height: 12px; margin-right: 3px; }
  .pointer { position: absolute; left: 311px; top: 99px; width: 38px; height: 37px; background: #000; box-shadow: 2px 2px 2px #5d707c; }
  .pointer svg { display: block; }

  .right { display: flex; flex-direction: column; border-left: 5px solid #84a3b5; }
  .upper { display: flex; flex: 1; }
  .form { flex: 1; display: flex; flex-direction: column; min-width: 0; }
  .material { display: flex; align-items: center; height: 18px; margin: 8px 0 0 4px; }
  .material label { width: 109px; text-decoration: underline; }
  .material input { width: 124px; height: 19px; padding: 0 3px; border: 1px solid #dcebf2; background: #9fbccb; font-family: "DejaVu Sans Mono", monospace; font-size: 11px; text-decoration: underline; }
  .material span { margin-left: 30px; }
  .tabs { display: flex; justify-content: flex-end; height: 20px; margin: 45px 167px 0 0; position: relative; font-size: 11px; }
  .tabs button { height: 20px; margin-left: -10px; position: relative; }
  .tabs button > span { height: 20px; box-sizing: border-box; border-top: 1px solid #dfecf2; border-right: 1px solid #56707f; background: #9dbbcb; padding: 1px 15px 0 0; line-height: 18px; }
  .tabs button.active > span { background: #aecddd; border-top-color: #fff; height: 21px; margin-bottom: -1px; }
  .slant { width: 20px; height: 20px; flex: none; display: block; }
  .slant .fill { fill: #9dbbcb; } .slant.active .fill { fill: #aecddd; }
  .slant .edge { fill: none; stroke: #e6f1f6; }
  .panel { flex: 1; margin-right: 76px; background: #aecddd; border-top: 1px solid #eef6fa; border-right: 1px solid #56798c; box-sizing: border-box; padding-top: 18px; }
  .lot { display: flex; align-items: center; justify-content: flex-end; padding-right: 7px; }
  .pick { flex: 1; display: flex; background: #edf9fd; height: 19px; margin-left: 12px; }
  .pick input { flex: 1; height: 19px; }
  .pick button { width: 18px; }
  .lot .qty, .lot .unit { height: 19px; border: 1px solid #dcebf2; background: #9fbccb; font-family: "DejaVu Sans Mono", monospace; font-size: 11px; padding: 0 2px; }
  .lot .qty { width: 117px; }
  .lot .unit { width: 25px; margin: 0 21px 0 2px; }
  .lot .tool { width: 19px; }
  .lights { width: 28px; height: 12px; margin-left: 4px; }
  .box { position: relative; margin: 22px 6px 0 8px; height: 164px; border: 1px solid #5b7f94; background: #9dbbcb; box-sizing: border-box; }
  .box-bar { height: 23px; border-bottom: 1px solid #5b7f94; display: flex; align-items: center; justify-content: flex-end; padding-right: 247px; box-sizing: border-box; }
  .box-bar .tool { width: 19px; }
  .box-head { height: 19px; border-bottom: 1px solid #5b7f94; box-sizing: border-box; }
  .costs { width: calc(100% - 102px); margin-top: -18px; position: relative; }
  .k2 { width: 72px; } .k3 { width: 53px; }
  .grid-table th { height: 17px; font-size: 11px; line-height: 16px; background: linear-gradient(#c3d9e4, #8fadbd); border: 1px solid #4d6c7d; padding: 0 2px; }
  .grid-table td { height: 18px; line-height: 15px; vertical-align: top; background: #edf9fd; border: 1px solid #5c7888; padding: 0 2px; }
  .costs td.r { padding-right: 7px; }
  .below { display: flex; gap: 1px; justify-content: flex-end; padding: 1px 144px 0 0; }
  .below .tool { width: 19px; }
  .below .partner { width: 70px; gap: 6px; color: #6a8898; }

  .vscroll { width: 16px; display: flex; flex-direction: column; gap: 2px; align-items: center; border-left: 1px solid #c9dae3; box-sizing: border-box; }
  .arrow { width: 14px; height: 14px; background: #f2fafd; border: 1px solid #5c7888; flex: none; }
  .arrow svg { width: 12px; height: 12px; display: block; fill: #111; }
  .trough { flex: 1; width: 14px; background: #8fadbd; border: 1px solid #5c7888; box-sizing: border-box; }
  .thumb { background: #f2fafd; box-sizing: border-box; }
  .upper .vscroll { padding-top: 1px; }
  .tall { height: 86%; border-bottom: 1px solid #5c7888; }
  .short { height: 44%; border-bottom: 1px solid #5c7888; }

  .splitter { height: 4px; background: #84a3b5; display: flex; justify-content: center; align-items: center; }
  .splitter i { width: 18px; height: 3px; background: repeating-linear-gradient(110deg, #eef6fa 0 2px, #6c8797 2px 4px); }
  .lower { border: 1px solid #5b7f94; margin: 1px 3px 2px 0; background: #9dbbcb; }
  .items-bar { height: 23px; justify-content: flex-end; padding-right: 141px; border-bottom: 1px solid #5b7f94; }
  .items-bar .sep { margin: 0 3px; }
  .items-bar .tool:not(.wide) { width: 23px; }
  .items-bar .wide { width: 35px; gap: 1px; }
  .items-row { display: flex; margin-top: 22px; border-top: 1px solid #5b7f94; padding-top: 1px; }
  .items { flex: 1; height: 100px; overflow: hidden; border-bottom: 1px solid #4d6c7d; }
  .items .i1 { width: 72px; } .items .i2 { width: 105px; } .items .i3 { width: 39px; } .items .i4 { width: 19px; }
  .items th { border-top: 0; height: 16px; line-height: 15px; }
  .sigma { display: flex; justify-content: space-between; }
  .sigma b { font-weight: normal; font-size: 9px; }
  .items td.far { padding-right: 7px; }
  .vscroll.small { width: 20px; border: 0; padding-top: 18px; }
  .hscroll { display: flex; gap: 3px; align-items: center; padding: 2px 23px 3px 3px; }
  .hscroll .trough { height: 14px; width: auto; }
  .hscroll .thumb { width: 66%; height: 100%; border-right: 1px solid #5c7888; }

  .callout {
    position: absolute; left: 482px; top: 149px; width: 433px; height: 487px; box-sizing: border-box; overflow: hidden;
    border: 4px solid #cc161d; border-radius: 46px / 60px;
    background: linear-gradient(#8fb1e3, #6590cf 75%);
    box-shadow: 0 0 1px 1px #e9a7a7, 3px 3px 4px #333;
  }
  .callout svg { width: 100%; height: 100%; display: block; }

  .status { height: 29px; box-sizing: border-box; padding: 4px 7px 5px 8px; display: flex; }
  .status > div { border: 1px solid #5b7f94; border-right-width: 0; background: #9dbbcb; display: flex; align-items: center; box-sizing: border-box; }
  .message { flex: 1; justify-content: flex-end; padding-right: 4px; }
  .message svg { width: 10px; height: 12px; }
  .cell { padding: 0 4px; }
  .cell.tcode { padding: 0 3px; gap: 3px; }
  .cell .icon { width: 14px; height: 14px; }
  .cell.ic { padding: 0 5px; }
  .cell.wide-ic { padding: 0 10px; }
  .cell.lock { padding-right: 7px; }
  .grip { width: 20px; height: 20px; }

  .taskbar { position: relative; height: 36px; display: flex; justify-content: space-between; font-family: "Open Sans", "Noto Sans", sans-serif; color: #fff; }
  .wall { position: absolute; inset: 0; width: 100%; height: 100%; }
  .apps, .tray { position: relative; display: flex; align-items: center; }
  .app { height: 36px; width: 55px; box-sizing: border-box; flex: none; }
  .app svg { width: 28px; height: 28px; display: block; }
  .app.start { width: 46px; } .app.start svg { width: 26px; height: 24px; }
  .app.ie { width: 61px; }
  .app.store { width: 60px; }
  .app.chrome { width: 59px; }
  .open { background: #ffffff40; border: 1px solid #ffffff55; border-bottom: 0; }
  .app.current { width: 48px; background: #ffffff80; }
  .app.current svg { width: 30px; height: 16px; }
  .stack { width: 8px; height: 36px; margin-right: 2px; background: repeating-linear-gradient(90deg, #fff6 0 2px, #7a592a 2px 3px); }
  .pic { margin-left: 3px; }
  .tray { font-size: 11px; line-height: 16px; padding-right: 15px; gap: 6px; }
  .chev { width: 10px; height: 10px; margin-right: 4px; }
  .lang, .clock { display: flex; flex-direction: column; align-items: center; }
  .lang { margin-left: 8px; } .clock { margin-left: 7px; }
</style>
